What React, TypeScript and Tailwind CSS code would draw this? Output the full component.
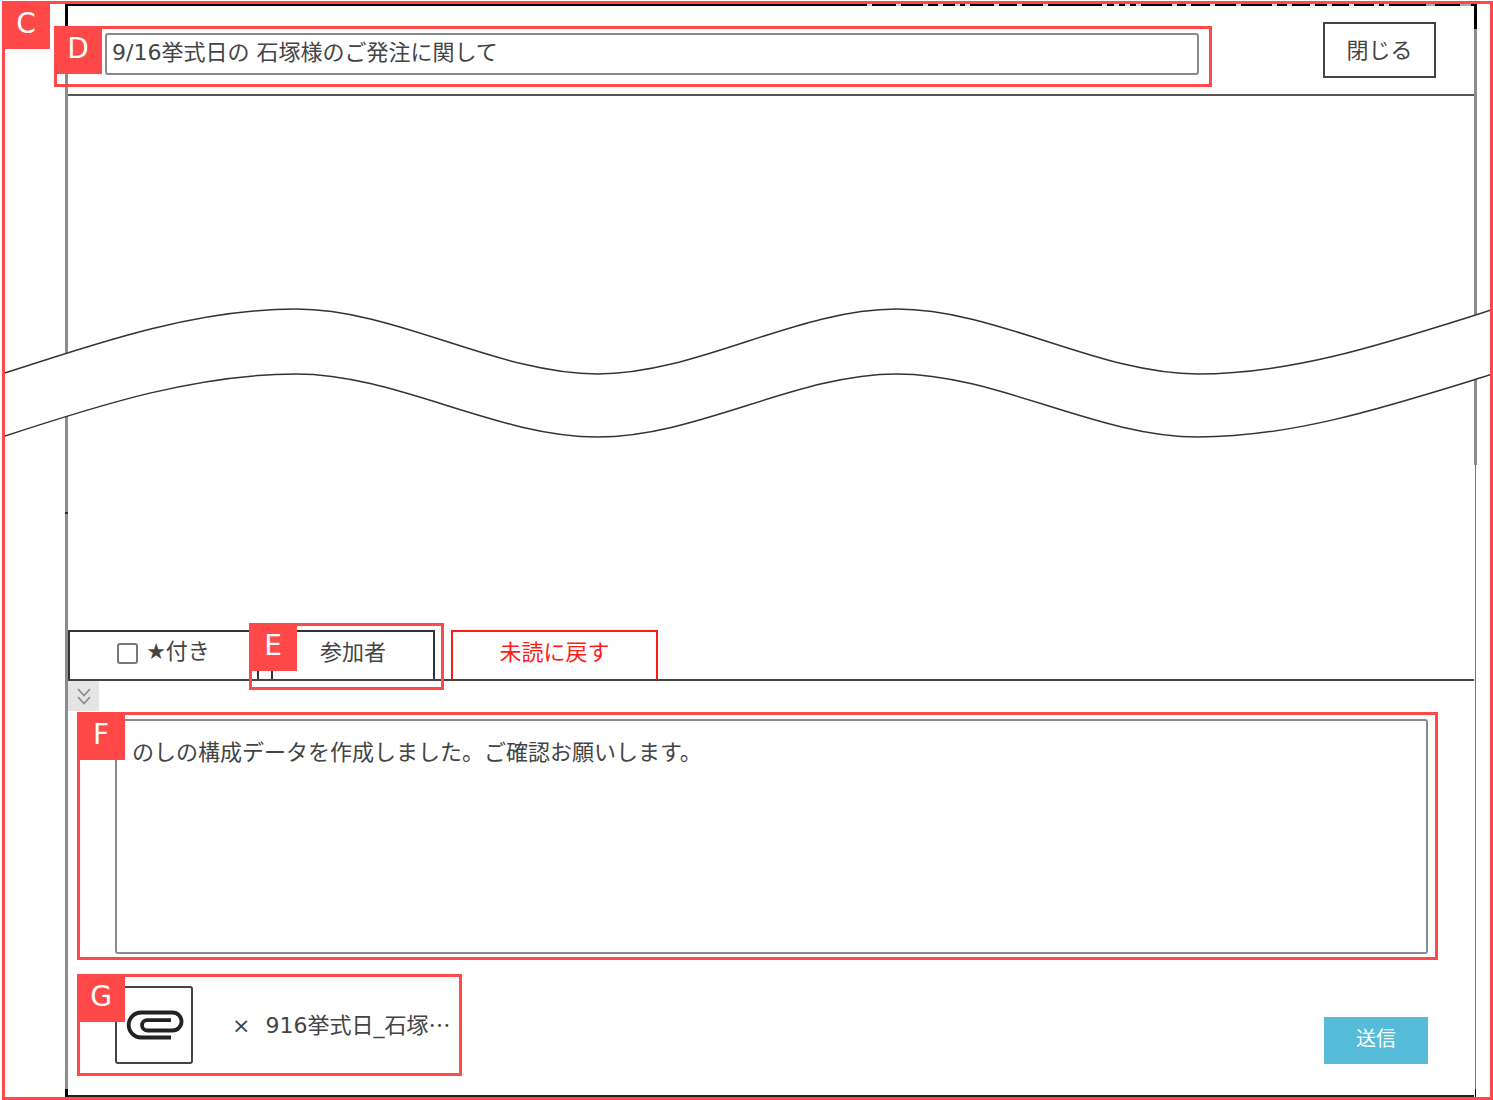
import React, { useState } from 'react';

const fontText = "font-['DejaVu_Sans','Noto_Sans_CJK_JP',sans-serif]";

interface CalloutProps {
  label: string;
  className: string;
}

// Red lettered frame laid over the part it points at
const Callout: React.FC<CalloutProps> = ({ label, className }) => (
  <div className={`absolute z-10 border-[3px] border-[#ff4848] pointer-events-none ${className}`}>
    <span className="absolute -top-[3px] -left-[3px] w-12 h-12 bg-[#ff4848] text-white text-[28px] leading-[46px] text-center">
      {label}
    </span>
  </div>
);

const PaperclipIcon: React.FC = () => (
  <svg viewBox="0 0 60 30" className="w-[60px] h-[30px]" fill="none" stroke="#222" strokeWidth="3.8" aria-hidden="true">
    <path d="M47 27.5H17.2A12.5 12.5 0 0 1 17.2 2.5H48.5A9 9 0 0 1 48.5 20.5H23.2A5.15 5.15 0 0 1 23.2 10.2H47" />
  </svg>
);

// Bits of the page behind the dialog that show through its top edge
const fragments = [10, 39, 66, 81, 98, 108, 137, 160, 186, 245, 257, 268, 279, 315, 329, 353, 379, 415, 430, 453, 470, 492, 517, 527];

const TopEdge: React.FC = () => (
  <svg viewBox="0 0 617 2" className="self-end w-[617px] h-[2px] shrink-0" aria-hidden="true">
    {fragments.map((x) => (
      <rect key={x} x={x} y="0" width="5" height="2" fill="#d8d8d8" />
    ))}
    <rect x="569" y="0" width="9" height="2" fill="#aaa" />
    <rect x="603" y="0" width="11" height="2" fill="#aaa" />
  </svg>
);

const WaveBreak: React.FC = () => (
  <svg
    viewBox="0 0 1485 132"
    preserveAspectRatio="none"
    className="absolute z-0 left-0 top-[306px] w-full h-[132px]"
    fill="none"
    aria-hidden="true"
  >
    <path
      fill="#fff"
      d="M0 67C100 34 195 2 293 2C393 2 493 67 593 67C693 67 791 2 891 2C991 2 1091 67 1191 67C1289 67 1385 34 1485 2.5V67C1385 98 1289 130 1191 130C1091 130 991 67 891 67C791 67 693 130 593 130C493 130 393 67 293 67C195 67 100 97 0 130Z"
    />
    <g stroke="#333" strokeWidth="1.5">
      <path d="M0 67C100 34 195 2 293 2C393 2 493 67 593 67C693 67 791 2 891 2C991 2 1091 67 1191 67C1289 67 1385 34 1485 2.5" />
      <path d="M0 130C100 97 195 67 293 67C393 67 493 130 593 130C693 130 791 67 891 67C991 67 1091 130 1191 130C1289 130 1385 98 1485 67" />
    </g>
  </svg>
);

const App: React.FC = () => {
  const [subject, setSubject] = useState('9/16挙式日の 石塚様のご発注に関して');
  const [message, setMessage] = useState('のしの構成データを作成しました。ご確認お願いします。');
  const [starred, setStarred] = useState(false);

  return (
    <div className={`min-h-screen bg-white pt-px pl-0.5 flex flex-col text-[22px] text-[#444] ${fontText}`}>
      <div className="relative flex-1 flex pl-[63px] pr-4 py-[3px]">
        <Callout label="C" className="inset-0" />
        <WaveBreak />

        <div className="w-[3px] flex flex-col bg-[#8c8c8c]">
          <div className="h-[22px] bg-black" />
          <div className="h-[486px]" />
          <div className="h-0.5 bg-[#333]" />
          <div className="flex-1" />
          <div className="h-2 bg-black" />
        </div>

        <main className="flex-1 min-w-0 flex flex-col border-b-2 border-[#222]">
          <div className="flex justify-end bg-black overflow-hidden">
            <TopEdge />
          </div>
          <header className="flex items-start justify-between py-4 pl-[37px] pr-[38px] border-b-2 border-[#555]">
            <div className="relative flex-1 mt-[11px] mr-[124px]">
              <Callout label="D" className="-top-[7px] -left-[51px] -right-[13px] -bottom-3" />
              <input
                aria-label="件名"
                value={subject}
                onChange={(e) => setSubject(e.target.value)}
                className="block w-full h-[42px] px-[5px] pb-2 border-2 border-[#8a8a8a] rounded-[3px] bg-white"
              />
            </div>
            <button type="button" className="w-[113px] h-14 border-2 border-[#444] bg-white">
              閉じる
            </button>
          </header>

          <div className="flex-1" />

          <div className="flex items-end border-b-2 border-[#444] h-[51px]">
            <label className="w-[191px] h-full flex items-center justify-center gap-2 pb-2 border-2 border-b-0 border-[#333]">
              <input
                type="checkbox"
                checked={starred}
                onChange={(e) => setStarred(e.target.checked)}
                className="appearance-none w-[21px] h-[21px] mt-1 border-2 border-[#777] rounded-[3px] bg-white checked:bg-[#55bbd9]"
              />
              <span>★付き</span>
            </label>
            <div className="relative h-full ml-3 mr-4">
              <Callout label="E" className="-top-[7px] -left-[22px] -right-[9px] -bottom-[11px]" />
              <button type="button" className="w-[164px] h-full pb-1.5 border-2 border-b-0 border-[#333]">
                参加者
              </button>
            </div>
            <button type="button" className="w-[207px] h-full pb-1.5 border-2 border-b-0 border-[#ff1a1a] text-[#ff1a1a]">
              未読に戻す
            </button>
          </div>

          <button
            type="button"
            aria-label="入力欄を閉じる"
            className="w-[31px] h-[30px] flex items-center justify-center bg-[#e5e5e5]"
          >
            <svg viewBox="0 0 14 17" className="w-[14px] h-[17px]" fill="none" stroke="#888" strokeWidth="1.6" aria-hidden="true">
              <path d="M1 1L7 7.5L13 1M1 9L7 15.5L13 9" />
            </svg>
          </button>

          <div className="relative mt-2 ml-[47px] mr-[46px]">
            <Callout label="F" className="-top-[7px] -left-[38px] -right-[10px] -bottom-[6px]" />
            <textarea
              aria-label="メッセージ"
              value={message}
              onChange={(e) => setMessage(e.target.value)}
              className="block w-full h-[235px] px-[15px] py-4 leading-8 border-2 border-[#8a8a8a] rounded-[3px] bg-white resize-none"
            />
          </div>

          <div className="flex items-end justify-between mt-8 mb-[31px] ml-[47px] mr-[46px]">
            <div className="relative flex items-center">
              <Callout label="G" className="-top-3 -left-[38px] -right-3 -bottom-3" />
              <button
                type="button"
                aria-label="ファイルを添付"
                className="w-[78px] h-[78px] flex items-center justify-center border-2 border-[#444] rounded-[3px] bg-white"
              >
                <PaperclipIcon />
              </button>
              <button type="button" aria-label="添付を削除" className="ml-[39px]">
                ×
              </button>
              <a href="#" className="ml-[15px] pb-0.5">
                916挙式日_石塚<span className="font-['Noto_Sans_CJK_JP',sans-serif]">…</span>
              </a>
            </div>
            <button type="button" className="w-[104px] h-[47px] pb-1 bg-[#55bbd9] text-white text-xl">
              送信
            </button>
          </div>
        </main>

        <div className="w-[3px] flex flex-col items-center">
          <div className="w-full h-[25px] bg-black" />
          <div className="w-full h-[436px] bg-[#8c8c8c]" />
          <div className="flex-1 w-px bg-[#777]" />
          <div className="w-px h-2 bg-black" />
        </div>
      </div>
    </div>
  );
};

export default App;
